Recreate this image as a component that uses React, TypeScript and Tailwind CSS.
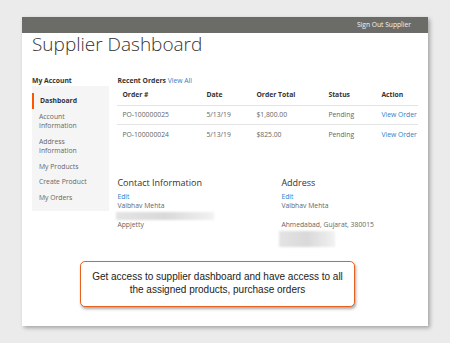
import React from "react"

const orders = [
  { id: "PO-100000025", date: "5/13/19", total: "$1,800.00", status: "Pending" },
  { id: "PO-100000024", date: "5/13/19", total: "$825.00", status: "Pending" },
]

const menu = [
  ["Account", "Information"],
  ["Address", "Information"],
  ["My Products"],
  ["Create Product"],
  ["My Orders"],
]

function Blur({ className }: { className: string }) {
  return (
    <div
      className={`bg-linear-to-r from-[#e4e4e4] via-[#d9d9d9] to-[#f2f2f2] blur-[1px] ${className}`}
    />
  )
}

export default function App() {
  return (
    <div className="h-[343px] w-[450px] overflow-hidden bg-[#ebebeb] pl-[22px] pt-[17px] font-['Open_Sans',sans-serif]">
      <div className="flex h-[309px] w-[406px] flex-col bg-white shadow-[2px_2px_4px_rgba(0,0,0,0.3)]">
        {/* top bar */}
        <div className="flex h-[16px] items-center justify-end bg-[#6b6c67] pr-[17px]">
          <span className="text-[6.7px] text-[#f2f2f2]">Sign Out Supplier</span>
        </div>

        <div className="flex flex-col px-[10px]">
          <h1 className="mt-[1px] text-[19px] font-light leading-[20px] text-[#333]">
            Supplier Dashboard
          </h1>

          <div className="mt-[22px] flex gap-[8px]">
            {/* sidebar */}
            <div className="flex w-[78px] flex-col">
              <div className="text-[6.8px] font-bold leading-[10px] text-[#333]">My Account</div>
              <div className="flex h-[125px] flex-col bg-[#f5f5f5] pt-[7px]">
                <div className="border-l-2 border-[#ff5501] py-[3px] pl-[6px] text-[6.8px] font-bold leading-[9.5px] text-[#333]">
                  Dashboard
                </div>
                {menu.map((lines) => (
                  <div key={lines.join()} className="py-[3px] pl-[7px] text-[6.8px] leading-[9.5px] text-[#666]">
                    {lines.map((l) => (
                      <div key={l}>{l}</div>
                    ))}
                  </div>
                ))}
              </div>
            </div>

            {/* main */}
            <div className="flex w-[303px] flex-col">
              <div className="text-[6.8px] leading-[10px] text-[#333]">
                <span className="font-bold">Recent Orders</span>{" "}
                <span className="text-[#2f7fc8]">View All</span>
              </div>
              <div className="grid h-[19.5px] grid-cols-[84px_50px_72px_53px_1fr] items-center border-b border-[#e4e4e4] pl-[5px] text-[6.8px] font-bold text-[#333]">
                <span>Order #</span>
                <span>Date</span>
                <span>Order Total</span>
                <span>Status</span>
                <span>Action</span>
              </div>
              {orders.map((o, i) => (
                <div
                  key={o.id}
                  className={`grid h-[19.5px] grid-cols-[84px_50px_72px_53px_1fr] items-center pl-[5px] text-[6.8px] text-[#666] ${
                    i === 0 ? "border-b border-[#e4e4e4]" : ""
                  }`}
                >
                  <span>{o.id}</span>
                  <span>{o.date}</span>
                  <span>{o.total}</span>
                  <span>{o.status}</span>
                  <span className="text-[#2f7fc8]">View Order</span>
                </div>
              ))}

              <div className="mt-[32px] flex text-[6.8px] leading-[9.5px] text-[#666]">
                <div className="flex w-[164px] flex-col">
                  <div className="mb-[3px] text-[9px] leading-[12px] text-[#333]">Contact Information</div>
                  <span className="text-[#2f7fc8]">Edit</span>
                  <span>Vaibhav Mehta</span>
                  <Blur className="ml-[-1px] mt-[1px] h-[8px] w-[98px]" />
                  <span className="mt-[0.5px] text-[#666]">Appjetty</span>
                </div>
                <div className="flex flex-col">
                  <div className="mb-[3px] text-[9px] leading-[12px] text-[#333]">Address</div>
                  <span className="text-[#2f7fc8]">Edit</span>
                  <span>Vaibhav Mehta</span>
                  <div className="h-[9.5px]" />
                  <span>Ahmedabad, Gujarat, 380015</span>
                  <Blur className="ml-[-2px] mt-[1px] h-[16px] w-[56px]" />
                </div>
              </div>
            </div>
          </div>

          {/* callout */}
          <div className="ml-[48px] mt-[14px] flex h-[46px] w-[275px] items-center justify-center rounded-[5px] border-[1.5px] border-[#e8621f] bg-white text-center font-['Liberation_Sans',Arial,sans-serif] text-[10px] leading-[12.3px] text-[#222] shadow-[1px_2px_3px_rgba(0,0,0,0.35)]">
            <p>
              Get access to supplier dashboard and have access to all
              <br />
              the assigned products, purchase orders
            </p>
          </div>
        </div>
      </div>
    </div>
  )
}
